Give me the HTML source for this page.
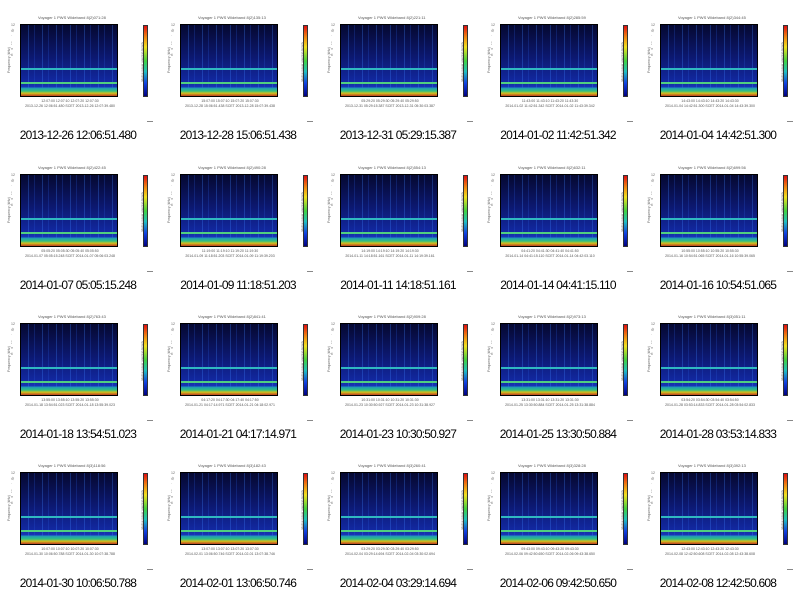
<!DOCTYPE html>
<html><head><meta charset="utf-8"><style>
*{margin:0;padding:0;box-sizing:border-box}
body{width:800px;height:596px;background:#fff;position:relative;overflow:hidden;font-family:"Liberation Sans",sans-serif}
.c{position:absolute;width:160px;height:150px}
.c::before{content:"12\A\A10\A\A8\A\A6\A\A4\A\A2\A\A0";white-space:pre;position:absolute;left:11px;top:22px;font-size:3.5px;line-height:6px;color:#666}
.c::after{content:"Frequency (kHz)";position:absolute;left:-4px;top:58px;font-size:3.5px;color:#666;transform:rotate(-90deg);white-space:nowrap}
.t{position:absolute;top:15px;left:38px;font-size:4px;color:#555;white-space:nowrap}
.p{position:absolute;left:20px;top:24px;width:98px;height:73px;border:1px solid #000;
background:
linear-gradient(to bottom,rgba(0,0,0,0) 88%,#1f90c0 88%,#2fc080 93%,#d0c020 96%,#c04020 100%),
repeating-linear-gradient(90deg,rgba(60,120,255,0) 0 7px,rgba(60,130,255,.3) 7px 8px,rgba(60,120,255,0) 8px 13px,rgba(40,90,220,.25) 13px 14px),
linear-gradient(to bottom,#050830 0%,#0c1870 45%,#1228a0 80%,#1838b8 88%)}
.h1,.h2{position:absolute;left:0;width:100%;height:2px}
.h1{top:43px;background:#30b8c0}
.h2{top:57px;background:#50d080}
.x{position:absolute;left:20px;top:99px;width:100px;font-size:3.5px;color:#555;white-space:nowrap;line-height:5px;text-align:center}
.cb{position:absolute;left:143px;top:25px;width:5px;height:72px;border:1px solid #333;
background:linear-gradient(to bottom,#e01010,#f08010 15%,#f0e020 30%,#40d040 50%,#20c0c0 65%,#1040e0 82%,#000080)}
.cb::after{content:"relative power spectral density";position:absolute;left:-22px;top:34px;font-size:3px;color:#666;transform:rotate(-90deg);white-space:nowrap}
.m{position:absolute;left:147px;top:121px;width:6px;height:1px;background:#888}
.cap{position:absolute;top:128px;left:0;width:156px;text-align:center;font-size:12px;letter-spacing:-0.8px;color:#000;white-space:nowrap}
</style></head><body>

<div class="c" style="left:0;top:0"><div class="t">Voyager 1 PWS Wideband 8(2)071:28</div><div class="p"><div class="h1"></div><div class="h2"></div></div><div class="x">12:07:00 12:07:10 12:07:20 12:07:30<br>2013-12-26 12:06:51.480 SCET 2013-12-26 12:07:39.480</div><div class="cb"></div><div class="m"></div><div class="cap">2013-12-26 12:06:51.480</div></div>
<div class="c" style="left:160px;top:0"><div class="t">Voyager 1 PWS Wideband 8(2)135:13</div><div class="p"><div class="h1"></div><div class="h2"></div></div><div class="x">15:07:00 15:07:10 15:07:20 15:07:30<br>2013-12-28 15:06:51.438 SCET 2013-12-28 15:07:39.438</div><div class="cb"></div><div class="m"></div><div class="cap">2013-12-28 15:06:51.438</div></div>
<div class="c" style="left:320px;top:0"><div class="t">Voyager 1 PWS Wideband 8(2)221:11</div><div class="p"><div class="h1"></div><div class="h2"></div></div><div class="x">05:29:20 05:29:30 05:29:40 05:29:50<br>2013-12-31 05:29:15.387 SCET 2013-12-31 05:30:03.387</div><div class="cb"></div><div class="m"></div><div class="cap">2013-12-31 05:29:15.387</div></div>
<div class="c" style="left:480px;top:0"><div class="t">Voyager 1 PWS Wideband 8(2)285:59</div><div class="p"><div class="h1"></div><div class="h2"></div></div><div class="x">11:43:00 11:43:10 11:43:20 11:43:30<br>2014-01-02 11:42:51.342 SCET 2014-01-02 11:43:39.342</div><div class="cb"></div><div class="m"></div><div class="cap">2014-01-02 11:42:51.342</div></div>
<div class="c" style="left:640px;top:0"><div class="t">Voyager 1 PWS Wideband 8(2)344:45</div><div class="p"><div class="h1"></div><div class="h2"></div></div><div class="x">14:43:00 14:43:10 14:43:20 14:43:30<br>2014-01-04 14:42:51.300 SCET 2014-01-04 14:43:39.300</div><div class="cb"></div><div class="m"></div><div class="cap">2014-01-04 14:42:51.300</div></div>

<div class="c" style="left:0;top:150px"><div class="t">Voyager 1 PWS Wideband 8(2)422:45</div><div class="p"><div class="h1"></div><div class="h2"></div></div><div class="x">05:05:20 05:05:30 05:05:40 05:05:50<br>2014-01-07 05:05:15.248 SCET 2014-01-07 05:06:03.248</div><div class="cb"></div><div class="m"></div><div class="cap">2014-01-07 05:05:15.248</div></div>
<div class="c" style="left:160px;top:150px"><div class="t">Voyager 1 PWS Wideband 8(2)490:28</div><div class="p"><div class="h1"></div><div class="h2"></div></div><div class="x">11:19:00 11:19:10 11:19:20 11:19:30<br>2014-01-09 11:18:51.203 SCET 2014-01-09 11:19:39.203</div><div class="cb"></div><div class="m"></div><div class="cap">2014-01-09 11:18:51.203</div></div>
<div class="c" style="left:320px;top:150px"><div class="t">Voyager 1 PWS Wideband 8(2)554:13</div><div class="p"><div class="h1"></div><div class="h2"></div></div><div class="x">14:19:00 14:19:10 14:19:20 14:19:30<br>2014-01-11 14:18:51.161 SCET 2014-01-11 14:19:39.161</div><div class="cb"></div><div class="m"></div><div class="cap">2014-01-11 14:18:51.161</div></div>
<div class="c" style="left:480px;top:150px"><div class="t">Voyager 1 PWS Wideband 8(2)632:11</div><div class="p"><div class="h1"></div><div class="h2"></div></div><div class="x">04:41:20 04:41:30 04:41:40 04:41:50<br>2014-01-14 04:41:15.110 SCET 2014-01-14 04:42:03.110</div><div class="cb"></div><div class="m"></div><div class="cap">2014-01-14 04:41:15.110</div></div>
<div class="c" style="left:640px;top:150px"><div class="t">Voyager 1 PWS Wideband 8(2)699:56</div><div class="p"><div class="h1"></div><div class="h2"></div></div><div class="x">10:55:00 10:55:10 10:55:20 10:55:30<br>2014-01-16 10:54:51.065 SCET 2014-01-16 10:55:39.065</div><div class="cb"></div><div class="m"></div><div class="cap">2014-01-16 10:54:51.065</div></div>

<div class="c" style="left:0;top:299px"><div class="t">Voyager 1 PWS Wideband 8(2)763:43</div><div class="p"><div class="h1"></div><div class="h2"></div></div><div class="x">13:55:00 13:55:10 13:55:20 13:55:30<br>2014-01-18 13:54:51.023 SCET 2014-01-18 13:55:39.023</div><div class="cb"></div><div class="m"></div><div class="cap">2014-01-18 13:54:51.023</div></div>
<div class="c" style="left:160px;top:299px"><div class="t">Voyager 1 PWS Wideband 8(2)841:41</div><div class="p"><div class="h1"></div><div class="h2"></div></div><div class="x">04:17:20 04:17:30 04:17:40 04:17:50<br>2014-01-21 04:17:14.971 SCET 2014-01-21 04:18:02.971</div><div class="cb"></div><div class="m"></div><div class="cap">2014-01-21 04:17:14.971</div></div>
<div class="c" style="left:320px;top:299px"><div class="t">Voyager 1 PWS Wideband 8(2)909:28</div><div class="p"><div class="h1"></div><div class="h2"></div></div><div class="x">10:31:00 10:31:10 10:31:20 10:31:30<br>2014-01-23 10:30:50.927 SCET 2014-01-23 10:31:38.927</div><div class="cb"></div><div class="m"></div><div class="cap">2014-01-23 10:30:50.927</div></div>
<div class="c" style="left:480px;top:299px"><div class="t">Voyager 1 PWS Wideband 8(2)973:13</div><div class="p"><div class="h1"></div><div class="h2"></div></div><div class="x">13:31:00 13:31:10 13:31:20 13:31:30<br>2014-01-25 13:30:50.884 SCET 2014-01-25 13:31:38.884</div><div class="cb"></div><div class="m"></div><div class="cap">2014-01-25 13:30:50.884</div></div>
<div class="c" style="left:640px;top:299px"><div class="t">Voyager 1 PWS Wideband 8(3)051:11</div><div class="p"><div class="h1"></div><div class="h2"></div></div><div class="x">03:54:20 03:54:30 03:54:40 03:54:50<br>2014-01-28 03:53:14.833 SCET 2014-01-28 03:54:02.833</div><div class="cb"></div><div class="m"></div><div class="cap">2014-01-28 03:53:14.833</div></div>

<div class="c" style="left:0;top:448px"><div class="t">Voyager 1 PWS Wideband 8(3)118:56</div><div class="p"><div class="h1"></div><div class="h2"></div></div><div class="x">10:07:00 10:07:10 10:07:20 10:07:30<br>2014-01-30 10:06:50.788 SCET 2014-01-30 10:07:38.788</div><div class="cb"></div><div class="m"></div><div class="cap">2014-01-30 10:06:50.788</div></div>
<div class="c" style="left:160px;top:448px"><div class="t">Voyager 1 PWS Wideband 8(3)182:43</div><div class="p"><div class="h1"></div><div class="h2"></div></div><div class="x">13:07:00 13:07:10 13:07:20 13:07:30<br>2014-02-01 13:06:50.746 SCET 2014-02-01 13:07:38.746</div><div class="cb"></div><div class="m"></div><div class="cap">2014-02-01 13:06:50.746</div></div>
<div class="c" style="left:320px;top:448px"><div class="t">Voyager 1 PWS Wideband 8(3)260:41</div><div class="p"><div class="h1"></div><div class="h2"></div></div><div class="x">03:29:20 03:29:30 03:29:40 03:29:50<br>2014-02-04 03:29:14.694 SCET 2014-02-04 03:30:02.694</div><div class="cb"></div><div class="m"></div><div class="cap">2014-02-04 03:29:14.694</div></div>
<div class="c" style="left:480px;top:448px"><div class="t">Voyager 1 PWS Wideband 8(3)328:28</div><div class="p"><div class="h1"></div><div class="h2"></div></div><div class="x">09:43:00 09:43:10 09:43:20 09:43:30<br>2014-02-06 09:42:50.650 SCET 2014-02-06 09:43:38.650</div><div class="cb"></div><div class="m"></div><div class="cap">2014-02-06 09:42:50.650</div></div>
<div class="c" style="left:640px;top:448px"><div class="t">Voyager 1 PWS Wideband 8(3)392:13</div><div class="p"><div class="h1"></div><div class="h2"></div></div><div class="x">12:43:00 12:43:10 12:43:20 12:43:30<br>2014-02-08 12:42:50.608 SCET 2014-02-08 12:43:38.608</div><div class="cb"></div><div class="m"></div><div class="cap">2014-02-08 12:42:50.608</div></div>

</body></html>
